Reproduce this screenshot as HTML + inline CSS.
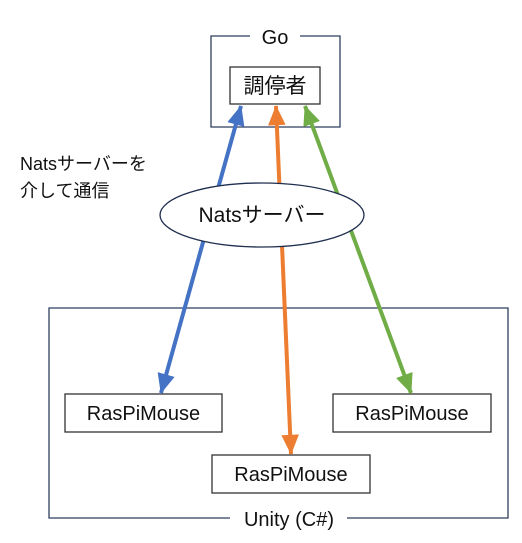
<!DOCTYPE html>
<html><head><style>
body{margin:0;background:#fff;}
svg text{font-family:"Liberation Sans","Noto Sans CJK JP",sans-serif;fill:#111;}
</style></head><body>
<svg width="522" height="538" xmlns="http://www.w3.org/2000/svg">
<defs>
<marker id="mb" markerWidth="5" markerHeight="4.4" refX="4.8" refY="2.2" orient="auto-start-reverse" markerUnits="strokeWidth"><path d="M0,0 L5,2.2 L0,4.4z" fill="#4472c4"/></marker>
<marker id="mo" markerWidth="5" markerHeight="4.4" refX="4.8" refY="2.2" orient="auto-start-reverse" markerUnits="strokeWidth"><path d="M0,0 L5,2.2 L0,4.4z" fill="#ed7d31"/></marker>
<marker id="mg" markerWidth="5" markerHeight="4.4" refX="4.8" refY="2.2" orient="auto-start-reverse" markerUnits="strokeWidth"><path d="M0,0 L5,2.2 L0,4.4z" fill="#70ad47"/></marker>
</defs>
<path d="M250,36 H211 V127 H340 V36 H300" fill="none" stroke="#2f3f5f" stroke-width="1.3"/>
<text x="275" y="44" font-size="20" text-anchor="middle">Go</text>
<rect x="230" y="67" width="90" height="37" fill="#fff" stroke="#333" stroke-width="1.3"/>
<text x="275" y="93" font-size="21" text-anchor="middle">調停者</text>
<path d="M230,518 H49 V308 H508 V518 H347" fill="none" stroke="#2f3f5f" stroke-width="1.3"/>
<text x="289" y="526" font-size="20" text-anchor="middle">Unity (C#)</text>
<rect x="65" y="394" width="157" height="38" fill="#fff" stroke="#333" stroke-width="1.3"/>
<text x="143.5" y="420" font-size="20" text-anchor="middle">RasPiMouse</text>
<rect x="333" y="394" width="158" height="38" fill="#fff" stroke="#333" stroke-width="1.3"/>
<text x="412" y="420" font-size="20" text-anchor="middle">RasPiMouse</text>
<rect x="212" y="455" width="158" height="38" fill="#fff" stroke="#333" stroke-width="1.3"/>
<text x="291" y="481" font-size="20" text-anchor="middle">RasPiMouse</text>
<line x1="161" y1="393" x2="241" y2="106" stroke="#4472c4" stroke-width="4" marker-start="url(#mb)" marker-end="url(#mb)"/>
<line x1="291" y1="454" x2="276" y2="106" stroke="#ed7d31" stroke-width="4" marker-start="url(#mo)" marker-end="url(#mo)"/>
<line x1="411" y1="393" x2="305" y2="106" stroke="#70ad47" stroke-width="4" marker-start="url(#mg)" marker-end="url(#mg)"/>
<ellipse cx="262" cy="215" rx="102" ry="32" fill="#fff" stroke="#1f2f4f" stroke-width="1.3"/>
<text x="262" y="222" font-size="21" text-anchor="middle">Natsサーバー</text>
<text x="20" y="170" font-size="18">Natsサーバーを</text>
<text x="20" y="197" font-size="18">介して通信</text>
</svg>
</body></html>
